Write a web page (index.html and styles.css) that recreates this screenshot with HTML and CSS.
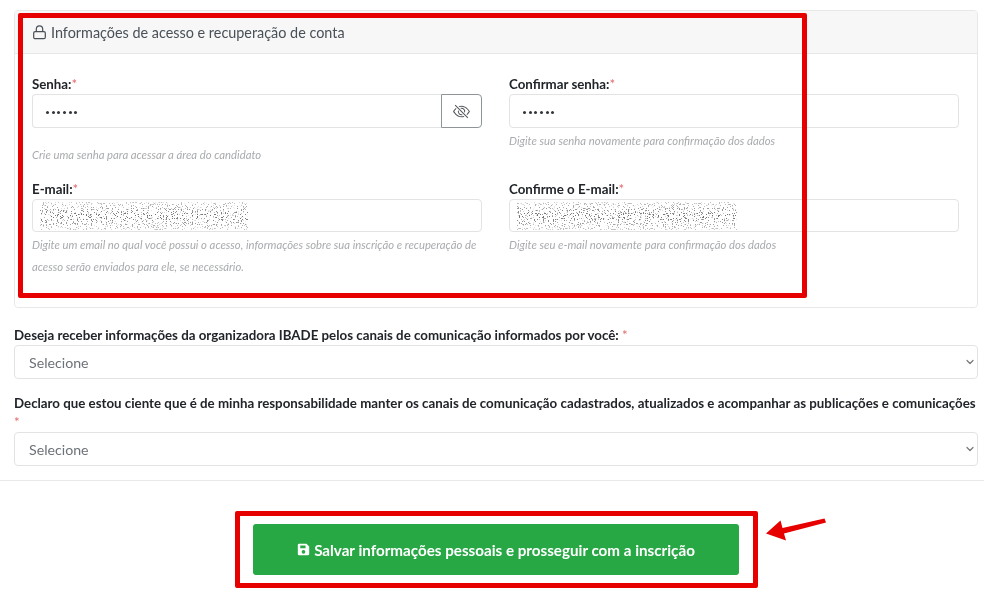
FILE: index.html
```html
<!DOCTYPE html>
<html lang="pt-BR">
<head>
<meta charset="utf-8">
<title>Inscrição</title>
<link rel="stylesheet" href="styles.css">
</head>
<body>
<svg class="defs" width="0" height="0" aria-hidden="true">
  <filter id="noise1" x="0" y="0" width="100%" height="100%">
    <feTurbulence type="fractalNoise" baseFrequency="0.8" numOctaves="2" seed="4"/>
    <feColorMatrix type="matrix" values="0 0 0 0 0.15  0 0 0 0 0.15  0 0 0 0 0.15  12 0 0 0 -7.1"/>
  </filter>
  <filter id="noise2" x="0" y="0" width="100%" height="100%">
    <feTurbulence type="fractalNoise" baseFrequency="0.8" numOctaves="2" seed="11"/>
    <feColorMatrix type="matrix" values="0 0 0 0 0.15  0 0 0 0 0.15  0 0 0 0 0.15  12 0 0 0 -7.1"/>
  </filter>
  <linearGradient id="fadeV" x1="0" y1="0" x2="0" y2="1">
    <stop offset="0" stop-color="#fff" stop-opacity="0.4"/>
    <stop offset="0.5" stop-color="#fff"/>
    <stop offset="1" stop-color="#fff" stop-opacity="0.4"/>
  </linearGradient>
  <mask id="band"><rect width="230" height="28" fill="url(#fadeV)"/></mask>
</svg>
<main class="page soft">
  <section class="card">
    <header class="card-header">
      <svg class="lock" viewBox="0 0 16 16" width="15" height="15" fill="none" stroke="currentColor" stroke-width="1.3"><rect x="1.8" y="7" width="12.4" height="7.6" rx="1.6"/><path d="M4.6 7V4.400a3.400 3.400 0 0 1 6.800 0V7"/></svg>
      <span>Informações de acesso e recuperação de conta</span>
    </header>
    <div class="card-body">
      <div class="field">
        <label class="label">Senha:<span class="req">*</span></label>
        <div class="group">
          <div class="input joined"><span class="dots"><i></i><i></i><i></i><i></i><i></i><i></i></span></div>
          <button class="eye" type="button" aria-label="Mostrar senha">
            <svg viewBox="0 0 16 16" width="17" height="17" fill="currentColor"><path d="M13.359 11.238C15.06 9.72 16 8 16 8s-3-5.5-8-5.5a7.028 7.028 0 0 0-2.79.588l.77.771A5.944 5.944 0 0 1 8 3.5c2.12 0 3.879 1.168 5.168 2.457A13.134 13.134 0 0 1 14.828 8c-.058.087-.122.183-.195.288-.335.48-.83 1.12-1.465 1.755-.165.165-.337.328-.517.486l.708.709z"/><path d="M11.297 9.176a3.5 3.5 0 0 0-4.474-4.474l.823.823a2.5 2.5 0 0 1 2.829 2.829l.822.822zm-2.943 1.299.822.822a3.5 3.5 0 0 1-4.474-4.474l.823.823a2.5 2.5 0 0 0 2.829 2.829z"/><path d="M3.35 5.47c-.18.16-.353.322-.518.487A13.134 13.134 0 0 0 1.172 8l.195.288c.335.48.83 1.12 1.465 1.755C4.121 11.332 5.881 12.5 8 12.5c.716 0 1.39-.133 2.02-.36l.77.772A7.029 7.029 0 0 1 8 13.5C3 13.5 0 8 0 8s.939-1.721 2.641-3.238l.708.709zm10.296 8.884-12-12 .708-.708 12 12-.708.708z"/></svg>
          </button>
        </div>
        <p class="hint">Crie uma senha para acessar a área do candidato</p>
      </div>
      <div class="field">
        <label class="label">Confirmar senha:<span class="req">*</span></label>
        <div class="input"><span class="dots"><i></i><i></i><i></i><i></i><i></i><i></i></span></div>
        <p class="hint">Digite sua senha novamente para confirmação dos dados</p>
      </div>
      <div class="field">
        <label class="label">E-mail:<span class="req">*</span></label>
        <div class="input input-mail"><svg class="blur-mail" width="208" height="28"><g mask="url(#band)"><rect width="208" height="28" filter="url(#noise1)"/></g></svg></div>
        <p class="hint hint-mail">Digite um email no qual você possui o acesso, informações sobre sua inscrição e recuperação de acesso serão enviados para ele, se necessário.</p>
      </div>
      <div class="field">
        <label class="label">Confirme o E-mail:<span class="req">*</span></label>
        <div class="input input-mail"><svg class="blur-mail" width="220" height="28"><g mask="url(#band)"><rect width="220" height="28" filter="url(#noise2)"/></g></svg></div>
        <p class="hint hint-mail">Digite seu e-mail novamente para confirmação dos dados</p>
      </div>
    </div>
  </section>

  <div class="question first">
    <label class="label wide">Deseja receber informações da organizadora IBADE pelos canais de comunicação informados por você: <span class="req">*</span></label>
    <div class="select"><span>Selecione</span><svg viewBox="0 0 16 16" width="8" height="8" fill="none" stroke="#777" stroke-width="2.400" stroke-linecap="round" stroke-linejoin="round"><path d="M2 5l6 6 6-6"/></svg></div>
  </div>
  <div class="question">
    <label class="label wide">Declaro que estou ciente que é de minha responsabilidade manter os canais de comunicação cadastrados, atualizados e acompanhar as publicações e comunicações<span class="req block">*</span></label>
    <div class="select"><span>Selecione</span><svg viewBox="0 0 16 16" width="8" height="8" fill="none" stroke="#777" stroke-width="2.400" stroke-linecap="round" stroke-linejoin="round"><path d="M2 5l6 6 6-6"/></svg></div>
  </div>
</main>

<hr class="rule">

<div class="actions soft">
  <button class="submit" type="button">
    <svg viewBox="0 0 16 16" width="13" height="13"><path fill="#fff" fill-rule="evenodd" d="M2.500 1h9.100L15 4.400v9.100a1.500 1.500 0 0 1-1.500 1.500h-11A1.500 1.500 0 0 1 1 13.500v-11A1.500 1.500 0 0 1 2.500 1zM4 3v3.500h6.500V3zM8 8.500a2.300 2.300 0 1 0 0 4.600 2.300 2.300 0 0 0 0-4.600z"/></svg>
    <span>Salvar informações pessoais e prosseguir com a inscrição</span>
  </button>
</div>

<div class="mark mark-top"></div>
<div class="mark mark-bottom"></div>
<svg class="arrow" width="64" height="26" viewBox="0 0 64 26"><path fill="#e60000" d="M59.500 0.500 L61 4.500 L19 15.500 L21 22.500 L1 15.500 L15.500 2.500 L17.500 10 Z"/></svg>
</body>
</html>
```
FILE: styles.css
```css
* { box-sizing: border-box; }
html, body { margin: 0; padding: 0; background: #fff; }
body {
  position: relative;
  width: 984px;
  height: 613px;
  overflow: hidden;
  font-family: "Lato", "Open Sans", sans-serif;
  color: #212529;
}
.defs { position: absolute; }
.soft { filter: blur(0.35px); }
.page { padding: 10px 6px 0 14px; }

.card {
  height: 298px;
  border: 1px solid #e8e8e8;
  border-radius: 4px;
  overflow: hidden;
}
.card-header {
  display: flex;
  align-items: center;
  gap: 4px;
  height: 43px;
  padding: 0 17px;
  background: #f7f7f7;
  border-bottom: 1px solid #e6e6e6;
  font-size: 14.4px;
  color: #495057;
}
.card-body {
  display: grid;
  grid-template-columns: 450px 450px;
  column-gap: 27px;
  padding: 21px 17px 0;
  align-content: start;
}
.field { min-width: 0; }
.label {
  display: block;
  line-height: 19px;
  font-size: 13.3px;
  font-weight: 700;
  color: #212529;
}
.req { color: #e0696f; font-weight: 400; }
.req.block { display: block; }
.input {
  display: flex;
  align-items: center;
  height: 34px;
  padding: 0 13px;
  background: #fff;
  border: 1px solid #e3e3e3;
  border-radius: 4px;
}
.input-mail { height: 33px; padding: 0 0 0 7px; }
.blur-mail { display: block; }
.dots { display: flex; gap: 2.700px; position: relative; top: 1px; }
.dots i { width: 3px; height: 3px; border-radius: 50%; background: #33363a; }
.group { display: flex; margin-bottom: 16px; }
.joined { flex: 1; border-radius: 4px 0 0 4px; border-right: 0; }
.eye {
  display: flex;
  align-items: center;
  justify-content: center;
  width: 41px;
  height: 34px;
  padding: 0;
  background: #fff;
  color: #55585c;
  border: 1px solid #8f9498;
  border-radius: 0 4px 4px 0;
}
.hint {
  margin: 2px 0 14px;
  font-size: 11.3px;
  line-height: 22px;
  font-style: italic;
  color: #a8abae;
}
.hint-mail { margin-top: 2px; }
.question { margin-top: 15px; }
.question.first { margin-top: 18px; }
.select {
  display: flex;
  align-items: center;
  justify-content: space-between;
  height: 34px;
  padding: 0 3px 0 14px;
  background: #fff;
  border: 1px solid #e3e3e3;
  border-radius: 4px;
  font-size: 14.2px;
  color: #6d7278;
}
.rule {
  margin: 14px 0 0;
  height: 1px;
  border: 0;
  background: #e9e9e9;
}
.actions {
  display: flex;
  justify-content: center;
  padding: 43px 6px 0 14px;
}
.submit {
  display: flex;
  align-items: center;
  justify-content: center;
  gap: 4px;
  width: 486px;
  height: 51px;
  padding: 0;
  border: 0;
  border-radius: 3px;
  background: #28a745;
  color: #fff;
  font-family: inherit;
  font-size: 15.2px;
  font-weight: 700;
}
.mark {
  position: absolute;
  border: 5px solid #e60000;
  border-radius: 2px;
}
.mark-top { left: 18px; top: 13px; width: 789px; height: 285px; }
.mark-bottom { left: 235px; top: 511px; width: 523px; height: 77px; }
.arrow { position: absolute; left: 765px; top: 518px; }
```
